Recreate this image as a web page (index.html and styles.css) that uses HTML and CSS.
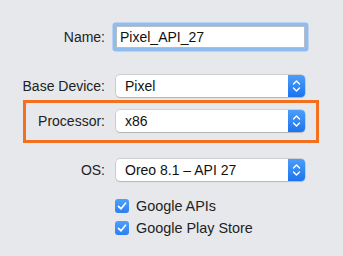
FILE: index.html
```html
<!DOCTYPE html>
<html>
<head>
<meta charset="utf-8">
<link rel="stylesheet" href="styles.css">
</head>
<body>
<div class="form">
  <div class="row row-name">
    <label class="label">Name:</label>
    <div class="input">Pixel_API_27</div>
  </div>
  <div class="row row-device">
    <label class="label">Base Device:</label>
    <div class="select"><span class="value">Pixel</span><span class="stepper"><svg width="17" height="22" viewBox="0 0 17 22"><path d="M5.5 9 L8.5 6 L11.5 9" fill="none" stroke="#fff" stroke-width="1.4" stroke-linecap="round" stroke-linejoin="round"/><path d="M5.5 13 L8.5 16 L11.5 13" fill="none" stroke="#fff" stroke-width="1.4" stroke-linecap="round" stroke-linejoin="round"/></svg></span></div>
  </div>
  <div class="row row-proc">
    <label class="label">Processor:</label>
    <div class="select"><span class="value">x86</span><span class="stepper"><svg width="17" height="22" viewBox="0 0 17 22"><path d="M5.5 9 L8.5 6 L11.5 9" fill="none" stroke="#fff" stroke-width="1.4" stroke-linecap="round" stroke-linejoin="round"/><path d="M5.5 13 L8.5 16 L11.5 13" fill="none" stroke="#fff" stroke-width="1.4" stroke-linecap="round" stroke-linejoin="round"/></svg></span></div>
  </div>
  <div class="row row-os">
    <label class="label">OS:</label>
    <div class="select"><span class="value">Oreo 8.1 – API 27</span><span class="stepper"><svg width="17" height="22" viewBox="0 0 17 22"><path d="M5.5 9 L8.5 6 L11.5 9" fill="none" stroke="#fff" stroke-width="1.4" stroke-linecap="round" stroke-linejoin="round"/><path d="M5.5 13 L8.5 16 L11.5 13" fill="none" stroke="#fff" stroke-width="1.4" stroke-linecap="round" stroke-linejoin="round"/></svg></span></div>
  </div>
  <div class="checks">
    <div class="check"><span class="box"><svg width="14" height="14" viewBox="0 0 14 14"><path d="M3.5 7.3 L6 9.8 L10.5 4.2" fill="none" stroke="#fff" stroke-width="1.7" stroke-linecap="round" stroke-linejoin="round"/></svg></span><span>Google APIs</span></div>
    <div class="check"><span class="box"><svg width="14" height="14" viewBox="0 0 14 14"><path d="M3.5 7.3 L6 9.8 L10.5 4.2" fill="none" stroke="#fff" stroke-width="1.7" stroke-linecap="round" stroke-linejoin="round"/></svg></span><span>Google Play Store</span></div>
  </div>
</div>
</body>
</html>
```
FILE: styles.css
```css
html, body {
  margin: 0;
  padding: 0;
  background: #e6e8ec;
  width: 343px;
  height: 256px;
  overflow: hidden;
}
body {
  font-family: "Liberation Sans", Arial, sans-serif;
  font-size: 14px;
  color: #222;
}
.form {
  display: flex;
  flex-direction: column;
  padding-top: 26px;
}
.row {
  display: flex;
  align-items: center;
}
.label {
  width: 116px;
  box-sizing: border-box;
  padding-right: 11px;
  text-align: right;
}
.input {
  width: 189px;
  height: 22px;
  box-sizing: border-box;
  background: #fff;
  border: 1px solid #b9bcc2;
  box-shadow: 0 0 0 3.5px #8fbdf2;
  border-radius: 1px;
  padding-left: 3px;
  line-height: 20px;
  color: #111;
}
.select {
  width: 189px;
  height: 22px;
  box-sizing: border-box;
  display: flex;
  align-items: center;
  background: #fff;
  border-radius: 4px;
  box-shadow: 0 0 0 0.5px rgba(0,0,0,0.22), 0 1px 1px rgba(0,0,0,0.12);
  overflow: hidden;
}
.value {
  flex: 1;
  padding-left: 9px;
  color: #111;
}
.stepper {
  width: 17px;
  height: 22px;
  display: flex;
  background: linear-gradient(#4c9ef9, #1c74ef);
}
.row-device {
  margin-top: 27px;
}
.row-proc {
  margin-top: 3px;
  margin-left: 23px;
  width: 296px;
  box-sizing: border-box;
  border: 3px solid #f2701e;
  padding: 7px 11px 8px 0;
}
.row-proc .label {
  width: 90px;
}
.row-os {
  margin-top: 16px;
}
.checks {
  margin-top: 14px;
  margin-left: 115px;
  display: flex;
  flex-direction: column;
}
.check {
  height: 22px;
  display: flex;
  align-items: center;
  gap: 7px;
  font-size: 14.4px;
}
.box {
  width: 14px;
  height: 14px;
  border-radius: 3px;
  background: linear-gradient(#4f9ff8, #2c80f2);
  display: flex;
}
```
